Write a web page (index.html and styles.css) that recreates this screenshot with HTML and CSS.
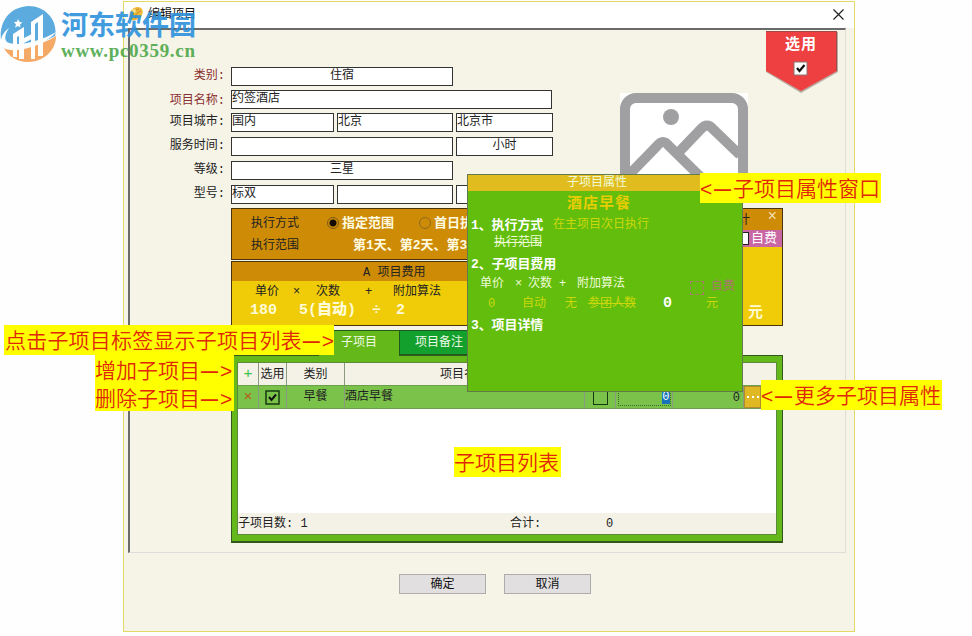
FILE: index.html
```
<!DOCTYPE html>
<html lang="zh-CN">
<head>
    <meta charset="UTF-8">
    <meta name="viewport" content="width=device-width, initial-scale=1.0">
    <title>编辑项目</title>
    <link rel="stylesheet" href="styles.css">
</head>
<body>
    <div class="window">
        <div class="titlebar">
            <svg class="app-icon" width="16" height="16" viewBox="0 0 16 16">
                <path d="M2 13C0 7 4 1 10 1c4 0 6 4 4 8-2 5-9 7-12 4z" fill="#f0b93a"/>
                <path d="M4 12c0-4 2-8 7-9M7 13c0-4 2-7 6-8" stroke="#c08a2a" fill="none"/>
                <circle cx="6" cy="5" r="2" fill="#fbe08a"/>
            </svg>
            <span>编辑项目</span>
            <svg class="close" width="11" height="11" viewBox="0 0 11 11">
                <path d="M.5 .5l10 10M10.500 .5l-10 10" stroke="#222" stroke-width="1.200"/>
            </svg>
        </div>

        <div class="panel">
            <div class="form">
                <label class="required">类别:</label>
                <div class="fields"><span class="field wide center">住宿</span></div>
                <label class="required low">项目名称:</label>
                <div class="fields"><span class="field full">约签酒店</span></div>
                <label>项目城市:</label>
                <div class="fields"><span class="field small">国内</span><span class="field medium">北京</span><span class="field last">北京市</span></div>
                <label>服务时间:</label>
                <div class="fields"><span class="field wide"></span><span class="field last center">小时</span></div>
                <label>等级:</label>
                <div class="fields"><span class="field wide center">三星</span></div>
                <label>型号:</label>
                <div class="fields"><span class="field small">标双</span><span class="field medium"></span><span class="field last"></span></div>
            </div>

            <div class="details">
                <div class="details-left">
                    <div class="execute">
                        <div class="execute-row">
                            <span>执行方式</span>
                            <i class="radio checked"></i><b>指定范围</b>
                            <i class="radio"></i><b>首日执行</b>
                        </div>
                        <div class="execute-row">
                            <span>执行范围</span>
                            <b class="days">第1天、第2天、第3天</b>
                        </div>
                    </div>
                    <div class="cost">
                        <div class="cost-title">A 项目费用</div>
                        <div class="cost-head">
                            <span>单价</span><span>×</span><span>次数</span><span>+</span><span>附加算法</span>
                        </div>
                        <div class="cost-values">
                            <span>180</span><span>5(<b>自动</b>)</span><span>÷</span><span>2</span>
                        </div>
                    </div>
                </div>
                <div class="total">
                    <div class="total-head"><span>合计</span><span class="times">×</span></div>
                    <div class="self"><i class="box"></i>自费</div>
                    <div class="unit">元</div>
                </div>
            </div>

            <div class="tabs">
                <span class="tab active">子项目</span>
                <span class="tab">项目备注</span>
            </div>
            <div class="sub-panel">
                <div class="sub-table">
                    <div class="row head">
                        <span class="plus">+</span><span>选用</span><span>类别</span><span>项目名称</span>
                    </div>
                    <div class="row item">
                        <span class="del">×</span>
                        <span><svg width="15" height="15" viewBox="0 0 15 15"><path d="M1 1h13v13H1z" fill="none" stroke="#163a10" stroke-width="1.500"/><path d="M4 7l2.500 3L11 4.500" fill="none" stroke="#111" stroke-width="2"/></svg></span>
                        <span>早餐</span>
                        <span class="name">酒店早餐</span>
                        <span><i class="empty"></i></span>
                        <span class="price"><i><mark>0</mark></i></span>
                        <span class="sum">0</span>
                        <span class="more">
                            <svg width="12" height="2" viewBox="0 0 12 2"><path d="M0 0h2v2H0zM5 0h2v2H5zM10 0h2v2h-2z" fill="#fff"/></svg>
                        </span>
                    </div>
                    <div class="rows"></div>
                    <div class="footer">
                        <span>子项目数: 1</span><span>合计:</span><span>0</span>
                    </div>
                </div>
            </div>

            <div class="ribbon">
                <svg width="74" height="66" viewBox="0 0 74 66">
                    <path d="M1 2h72v40L36 63 1 42z" fill="#b8aca4"/>
                    <path d="M1 1h71v40L36 61 1 41z" fill="#ee4040"/>
                    <path d="M1 1.500h71M71.500 1v40" stroke="#a04a48" fill="none"/>
                    <path d="M29 32h13v13H29z" fill="#fff" stroke="#8a7572"/>
                    <path d="M32 38l2.500 3 5-6" fill="none" stroke="#111" stroke-width="2.200"/>
                </svg>
                <b>选用</b>
            </div>
            <svg class="photo" width="130" height="96" viewBox="0 0 130 96">
                <path d="M1 0h128v96H1z" fill="#fff"/>
                <rect x="6" y="5" width="118" height="110" rx="11" fill="none" stroke="#a09fa1" stroke-width="10"/>
                <circle cx="52" cy="24" r="8" fill="#a09fa1"/>
                <path d="M4 88l34-35q6-8 12 0l46 45M60 59l22-23q6-7 12 0l27 26" fill="none" stroke="#a09fa1" stroke-width="10"/>
            </svg>
        </div>

        <div class="buttons">
            <button type="button">确定</button>
            <button type="button">取消</button>
        </div>
    </div>

    <div class="popup">
        <div class="popup-title">子项目属性</div>
        <h1>酒店早餐</h1>
        <div class="line first"><b>1、执行方式</b><span class="yellow">在主项目次日执行</span></div>
        <div class="line range"><s>执行范围</s></div>
        <div class="line second"><b>2、子项目费用</b></div>
        <div class="line calc">
            <span>单价</span><span>×</span><span>次数</span><span>+</span><span>附加算法</span><span class="self-off"><i></i>自费</span>
        </div>
        <div class="line values">
            <span>0</span><span>自动</span><span>无</span><s>参团人数</s><b class="white">0</b><span>元</span>
        </div>
        <div class="line third"><b>3、项目详情</b></div>
    </div>

    <div class="note note-popup"><i>&lt;</i><i class="dash">—</i>子项目属性窗口</div>
    <div class="note note-tab">点击子项目标签显示子项目列表<i class="dash">—</i><i>&gt;</i></div>
    <div class="note note-edit">
        <div>增加子项目<i class="dash">—</i><i>&gt;</i></div>
        <div>删除子项目<i class="dash">—</i><i>&gt;</i></div>
    </div>
    <div class="note note-list">子项目列表</div>
    <div class="note note-more"><i>&lt;</i><i class="dash">—</i>更多子项目属性</div>

    <div class="watermark">
        <svg width="58" height="58" viewBox="0 0 58 58">
            <path d="M3 43C-3 28 2 3 28 1c20 0 30 17 27 30C42 38 19 46 3 38z" fill="#4ba3db"/>
            <path d="M56 31c0 15-13 26-28 26C17 57 8 51 4 43c18 3 38-3 52-12z" fill="#f5a057"/>
            <path d="M2 42c-3-6 0-14 7-19-4 6-5 11-2 14 11 6 36-2 49-10-9 12-41 24-54 15z" fill="#fff"/>
            <path d="M13 29l11-7v32h-5V31l-2 1v20h-4zM31 17l12-8v42h-5V17l-3 2v35h-4z" fill="#fff"/>
            <path d="M22 34l12-6v5l-12 6z" fill="#fff"/>
            <path d="M18 14l1.500 3 3 .5-2.500 2 .5 3-2.500-1.500-3 1.500 1-3-2-2.500 3-.3z" fill="#fff"/>
        </svg>
        <div>
            <div class="site-name">河东软件园</div>
            <div class="site-url">www.pc0359.cn</div>
        </div>
    </div>
</body>
</html>
```
FILE: styles.css
```
* {
    margin: 0;
    padding: 0;
    box-sizing: border-box;
}

body {
    position: relative;
    width: 972px;
    height: 636px;
    overflow: hidden;
    background: #fefefe;
    font: 12px/14px "Liberation Mono", "Noto Sans CJK SC", sans-serif;
    color: #222;
}

i, em {
    font-style: normal;
}

svg {
    display: block;
}

.window {
    width: 732px;
    height: 631px;
    margin: 1px 0 0 123px;
    border: 1px solid #e6d866;
    background: #f6f3e7;
}

.titlebar {
    display: flex;
    align-items: center;
    height: 26px;
    padding: 0 10px 0 4px;
    background: #fff;
    color: #111;
}

.app-icon {
    margin: -2px 4px 0 0;
}

.close {
    margin: -2px 0 0 auto;
}

/* main panel */
.panel {
    position: relative;
    width: 718px;
    height: 525px;
    margin-left: 4px;
    padding: 37px 0 0 101px;
    border: 1px solid #deddd8;
    border-top: 2px solid #6b6b6b;
    border-left: 2px solid #6b6b6b;
}

.form {
    display: grid;
    grid-template-columns: 101px 322px;
    grid-template-rows: 23px 23px 24px 24px 24px 20px;
    margin-left: -101px;
}

.form label {
    padding: 2px 6px 0 0;
    text-align: right;
}

.form .low {
    padding-top: 4px;
}

.form .required {
    color: #8a2f2f;
}

.fields {
    display: flex;
    gap: 3px;
}

.field {
    height: 19px;
    border: 1px solid #333;
    background: #fff;
    line-height: 17px;
}

.wide { width: 222px; }
.full { width: 321px; }
.small { width: 103px; }
.medium { width: 116px; }
.last { width: 97px; }

.center {
    text-align: center;
}

/* execution and cost */
.details {
    display: flex;
    width: 552px;
    height: 118px;
    margin-top: 3px;
}

.details-left {
    width: 482px;
}

.execute {
    height: 52px;
    padding: 4px 0 0 19px;
    border: 1px solid #4a3410;
    background: #ce8c06;
}

.execute-row {
    display: flex;
    align-items: center;
    height: 22px;
    white-space: nowrap;
}

.execute-row b {
    color: #fffbe0;
    font-size: 13px;
}

.radio {
    width: 12px;
    height: 12px;
    margin: -2px 3px 0 28px;
    border: 1px solid #8a6a24;
    border-radius: 50%;
}

.checked {
    border-color: #7a5a1a;
    background: radial-gradient(circle, #140c00 3px, #ce8c06 4px);
}

.execute-row .radio:nth-of-type(2) {
    margin-left: 25px;
}

.execute-row .days {
    margin-left: 54px;
}

.cost {
    height: 65px;
    margin-top: 1px;
    border: 1px solid #4a3410;
    background: #efcb08;
}

.cost-title {
    height: 19px;
    padding-left: 131px;
    background: #ce8c06;
    line-height: 22px;
}

.cost-head {
    display: grid;
    grid-template-columns: 38px 23px 49px 28px 60px;
    padding: 4px 0 0 23px;
}

.cost-values {
    display: grid;
    grid-template-columns: 49px 73px 24px 20px;
    padding: 3px 0 0 18px;
    color: #fffbd6;
    font-size: 15px;
    font-weight: bold;
    line-height: 17px;
    white-space: nowrap;
}

.cost-values b {
    font-size: 15px;
}

.total {
    width: 70px;
    border: 1px solid #4a3410;
    background: #efcb08;
}

.total-head {
    display: flex;
    justify-content: space-between;
    height: 21px;
    padding: 5px 5px 0 12px;
    background: #ce8c06;
}

.times {
    margin-top: -4px;
    color: #f5deb0;
    font-size: 16px;
}

.self {
    display: flex;
    align-items: center;
    height: 17px;
    padding-left: 22px;
    background: #c966a4;
    color: #fff;
    font-size: 13px;
}

.box {
    width: 13px;
    height: 13px;
    margin-right: 2px;
    border: 1px solid #222;
    background: #fff;
}

.unit {
    padding: 60px 0 0 34px;
    color: #fffbd6;
    font-size: 15px;
    font-weight: bold;
}

/* tabs */
.tabs {
    display: flex;
    height: 25px;
    margin: 4px 0 0 88px;
}

.tab {
    width: 80px;
    border: 1px solid #1d5a1c;
    background: #14a02c;
    color: #eefbe6;
    line-height: 24px;
    text-align: center;
}

.tab.active {
    z-index: 1;
    height: 26px;
    border-width: 1px 0 0;
    background: #64b81a;
}

.sub-panel {
    width: 552px;
    height: 188px;
    padding: 6px 5px 7px;
    border: 1px solid #34581c;
    border-bottom-width: 2px;
    background: #64b81a;
}

.sub-table {
    height: 173px;
    border: 1px solid #5c8a3c;
    background: #fff;
}

.row {
    display: grid;
    grid-template-columns: 21px 28px 58px 240px 31px 57px 71px 17px;
    height: 23px;
    text-align: center;
}

.row > span {
    display: flex;
    align-items: center;
    justify-content: center;
    border-right: 1px solid #8a9a80;
}

.head {
    height: 22px;
    background: #f4f1e6;
}

.head > span {
    padding-top: 2px;
}

.head > span:nth-child(4) {
    padding-right: 2px;
    border: 0;
}

.plus {
    color: #39c24e;
    font-size: 15px;
}

.item {
    width: 524px;
    height: 24px;
    border-top: 1px solid #6aa04a;
    border-bottom: 1px solid #6f9a58;
    background: #7ac24a;
}

.row .del {
    padding-top: 2px;
    color: #b85c1c;
    font-size: 15px;
}

.row .name {
    justify-content: flex-start;
}

.empty {
    width: 15px;
    height: 15px;
    border: 1.500px solid #163a10;
}

.row .price i {
    width: 53px;
    height: 18px;
    border: 1px dotted #3c6a28;
    line-height: 17px;
    text-align: right;
}

mark {
    background: #1874b8;
    color: #fff;
}

.row .sum {
    justify-content: flex-end;
    padding: 1px 3px 0 0;
}

.row .more {
    border: 1px solid #b08e30;
    background: #e0b824;
}

.rows {
    height: 104px;
}

.footer {
    display: grid;
    grid-template-columns: 272px 96px 20px;
    height: 21px;
    background: #f4f1e6;
    line-height: 23px;
}

/* image and ribbon, over the panel background */
.photo {
    position: absolute;
    top: 63px;
    left: 489px;
}

.ribbon {
    position: absolute;
    top: 0;
    left: 635px;
}

.ribbon b {
    position: absolute;
    top: 9px;
    left: 20px;
    color: #fff;
    font-size: 15px;
    letter-spacing: 1px;
    white-space: nowrap;
}

.buttons {
    display: flex;
    gap: 18px;
    padding: 21px 0 0 275px;
}

button {
    width: 87px;
    height: 20px;
    padding-top: 1px;
    border: 1px solid #adadad;
    background: #e2dfe0;
    color: #111;
    font: inherit;
}

/* sub item window */
.popup {
    position: absolute;
    top: 174px;
    left: 467px;
    width: 276px;
    height: 218px;
    border: 1px solid #647a4c;
    background: #62bd0c;
    color: #effbd8;
    white-space: nowrap;
}

.popup-title {
    height: 16px;
    padding-left: 99px;
    background: #e0bc1e;
    line-height: 17px;
}

.popup h1 {
    height: 25px;
    padding-left: 99px;
    color: #e8cc04;
    font-size: 15px;
    letter-spacing: 1px;
    line-height: 27px;
}

.line {
    display: grid;
    height: 18px;
    padding-left: 3px;
    line-height: 19px;
}

.line > b {
    color: #fff;
    font-size: 13px;
    letter-spacing: -0.1px;
}

.first {
    grid-template-columns: 82px auto;
}

.range {
    padding-left: 26px;
}

.second {
    height: 21px;
    line-height: 25px;
}

.calc {
    grid-template-columns: 35px 13px 31px 18px 113px auto;
    padding-left: 12px;
    line-height: 23px;
}

.self-off {
    display: flex;
    align-items: center;
    gap: 7px;
    padding-top: 3px;
    color: #a8786c;
}

.self-off i {
    width: 14px;
    height: 14px;
    border: 1px dashed #a8786c;
}

.values {
    grid-template-columns: 34px 43px 23px 75px 43px auto;
    height: 20px;
    padding-left: 20px;
    line-height: 26px;
}

.yellow, .values {
    color: #ccd80c;
}

.values .white {
    font-size: 15px;
}

.third {
    line-height: 29px;
}

/* yellow notes */
.note {
    position: absolute;
    z-index: 2;
    background: #ff0;
    color: #e02808;
    font: 350 21px/28px "Noto Sans CJK SC", sans-serif;
    white-space: nowrap;
}

.note i {
    display: inline-block;
    width: 13px;
    font-family: "Liberation Sans", sans-serif;
    line-height: 20px;
}

.note .dash {
    width: 18px;
    margin: 0 1px;
    font-size: 17px;
    font-weight: bold;
    vertical-align: 1px;
}

.note-popup {
    top: 173px;
    left: 700px;
    width: 181px;
    height: 30px;
}

.note-tab {
    top: 325px;
    left: 4px;
    width: 330px;
    height: 30px;
    padding-left: 1px;
    letter-spacing: 0.2px;
}

.note-edit {
    top: 355px;
    left: 95px;
    width: 139px;
    height: 56px;
}

.note-edit div {
    height: 28px;
}

.note-list {
    top: 447px;
    left: 454px;
    width: 107px;
    height: 30px;
}

.note-more {
    top: 380px;
    left: 761px;
    width: 181px;
    height: 30px;
}

.watermark {
    position: absolute;
    top: 5px;
    left: 0;
    display: flex;
    gap: 3px;
    opacity: 0.9;
}

.site-name {
    height: 36px;
    color: #2c92dc;
    font: bold 27px/37px "Noto Sans CJK SC", sans-serif;
}

.site-url {
    color: #4ca848;
    font: bold 19px/20px "Liberation Serif", serif;
    letter-spacing: 0.7px;
}
```
